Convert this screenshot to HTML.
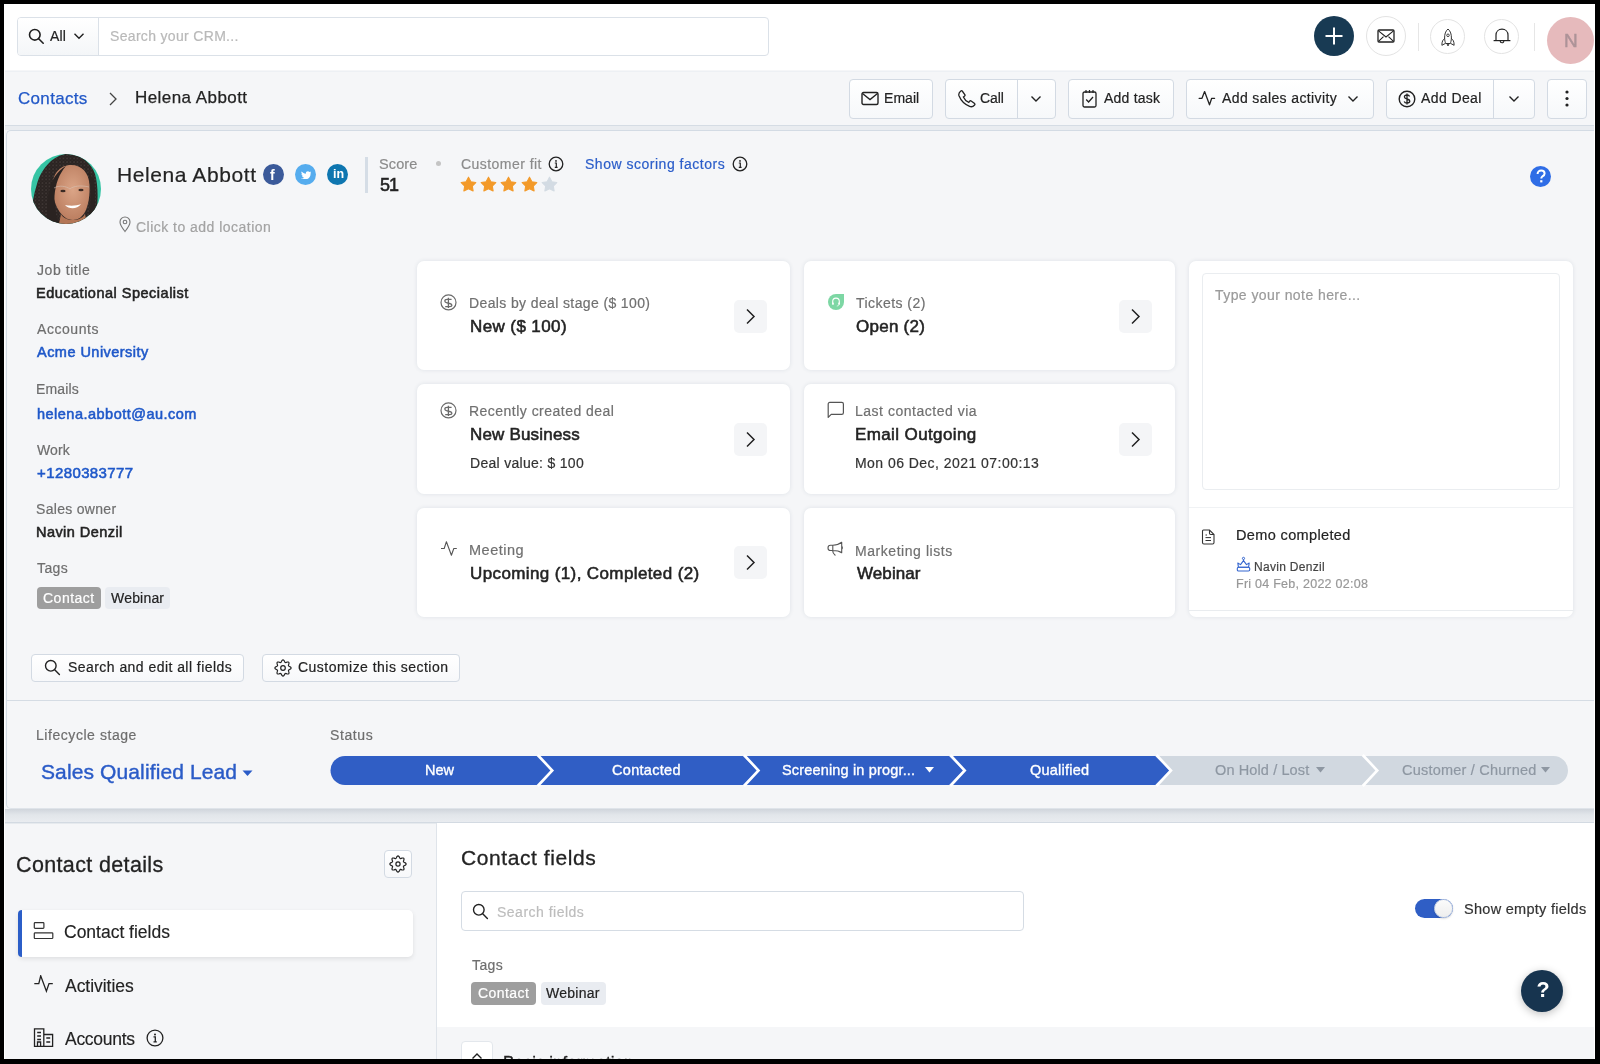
<!DOCTYPE html><html><head><meta charset="utf-8"><style>
html,body{margin:0;padding:0;}
body{width:1600px;height:1064px;position:relative;overflow:hidden;background:#f5f6f8;font-family:"Liberation Sans", sans-serif;}
.a{position:absolute;box-sizing:border-box;}
.t{position:absolute;white-space:nowrap;line-height:1;will-change:transform;}
</style></head><body>
<div class="a" style="left:0px;top:0px;width:1600px;height:70px;background:#fff;"></div>
<div class="a" style="left:0px;top:71px;width:1600px;height:1px;background:#edf0f4;"></div>
<div class="a" style="left:17px;top:17px;width:752px;height:39px;background:#fff;border:1px solid #dbe1e8;border-radius:4px;"></div>
<div class="a" style="left:18px;top:18px;width:80px;height:37px;background:linear-gradient(#ffffff,#f4f6f8);border-radius:3px 0 0 3px;"></div>
<div class="a" style="left:98px;top:18px;width:1px;height:37px;background:#dbe1e8;"></div>
<svg class="a" style="left:28px;top:28px;" width="17" height="17" viewBox="0 0 17 17" fill="none"><circle cx="6.8" cy="6.8" r="5.3" stroke="#1f1f1f" stroke-width="1.6"/><path d="M10.7 10.7 L15.2 15.2" stroke="#1f1f1f" stroke-width="1.6" stroke-linecap="round"/></svg>
<div class="t" style="left:49.80px;top:29.15px;font-size:14px;letter-spacing:0.100px;color:#232323;-webkit-text-stroke:0.2px #232323;">All</div>
<svg class="a" style="left:73px;top:32px;" width="12" height="8" viewBox="0 0 12 8" fill="none"><path d="M1.5 1.8 L6 6.2 L10.5 1.8" stroke="#1f1f1f" stroke-width="1.4" fill="none"/></svg>
<div class="t" style="left:110.00px;top:29.15px;font-size:14px;letter-spacing:0.324px;color:#b9b9b9;-webkit-text-stroke:0.2px #b9b9b9;">Search your CRM...</div>
<div class="a" style="left:1314px;top:16px;width:40px;height:40px;background:#183a53;border-radius:50%;"></div>
<svg class="a" style="left:1324px;top:26px;" width="20" height="20" viewBox="0 0 20 20" fill="none"><path d="M10 1.5 V18.5 M1.5 10 H18.5" stroke="#fff" stroke-width="2"/></svg>
<div class="a" style="left:1366px;top:16px;width:40px;height:40px;background:#fff;border:1px solid #e3e3e3;border-radius:50%;"></div>
<svg class="a" style="left:1377px;top:29px;" width="18" height="14" viewBox="0 0 18 14" fill="none"><rect x="1" y="1" width="16" height="12" rx="1" stroke="#222" stroke-width="1.3"/><path d="M1.5 1.8 L9 8 L16.5 1.8 M1.5 12.4 L6.5 7.6 M16.5 12.4 L11.5 7.6" stroke="#222" stroke-width="1.1"/></svg>
<div class="a" style="left:1418px;top:23px;width:1px;height:28px;background:#e6e6e6;"></div>
<div class="a" style="left:1430px;top:19px;width:35px;height:35px;background:#fff;border:1px solid #e3e3e3;border-radius:50%;"></div>
<svg class="a" style="left:1439px;top:28px;" width="18" height="18" viewBox="0 0 18 18" fill="none"><path d="M9 1 C6.5 3 5.5 6.5 5.6 10 C5.7 12.5 6.2 14.5 6.8 15.5 H11.2 C11.8 14.5 12.3 12.5 12.4 10 C12.5 6.5 11.5 3 9 1 Z" stroke="#333" stroke-width="1"/><circle cx="9" cy="7.3" r="1.3" stroke="#333" stroke-width="0.9"/><path d="M5.8 10.5 C4 11.5 2.8 13.5 2.9 17.3 L6.6 15.3 M12.2 10.5 C14 11.5 15.2 13.5 15.1 17.3 L11.4 15.3 M8.2 15.5 L8.5 17.5 H9.5 L9.8 15.5" stroke="#333" stroke-width="1"/></svg>
<div class="a" style="left:1484px;top:19px;width:35px;height:35px;background:#fff;border:1px solid #e3e3e3;border-radius:50%;"></div>
<svg class="a" style="left:1492px;top:28px;" width="20" height="18" viewBox="0 0 20 18" fill="none"><path d="M4 12.6 V7 C4 3.6 6.6 1.2 10 1.2 C13.4 1.2 16 3.6 16 7 V12.6" stroke="#222" stroke-width="1.2"/><path d="M1.6 12.6 H18.4" stroke="#222" stroke-width="1.2"/><path d="M8.2 13 A1.8 1.8 0 0 0 11.8 13" stroke="#222" stroke-width="1.1"/></svg>
<div class="a" style="left:1534px;top:23px;width:1px;height:28px;background:#e6e6e6;"></div>
<div class="a" style="left:1546.5px;top:16.5px;width:47px;height:47px;background:#e6babc;border-radius:50%;"></div>
<div class="t" style="left:1563.80px;top:30.61px;font-size:19px;letter-spacing:-1.000px;color:#ad9398;-webkit-text-stroke:0.5px #ad9398;">N</div>
<div class="t" style="left:18.00px;top:90.31px;font-size:17px;letter-spacing:0.314px;color:#2258c7;-webkit-text-stroke:0.25px #2258c7;">Contacts</div>
<svg class="a" style="left:108px;top:91px;" width="10" height="16" viewBox="0 0 10 16" fill="none"><path d="M2 2 L8 8 L2 14" stroke="#444" stroke-width="1.3" fill="none"/></svg>
<div class="t" style="left:135.25px;top:88.81px;font-size:17px;letter-spacing:0.438px;color:#232323;-webkit-text-stroke:0.25px #232323;">Helena Abbott</div>
<div class="a" style="left:849px;top:79px;width:84px;height:40px;background:linear-gradient(#ffffff,#f6f8fa);border:1px solid #d3dae3;border-radius:4px;"></div>
<svg class="a" style="left:861px;top:91px;" width="18" height="15" viewBox="0 0 18 15" fill="none"><rect x="1" y="1.5" width="16" height="12" rx="1.5" stroke="#222" stroke-width="1.4"/><path d="M1.5 2.5 L9 8.5 L16.5 2.5" stroke="#222" stroke-width="1.4"/></svg>
<div class="t" style="left:883.80px;top:91.05px;font-size:14px;letter-spacing:0.050px;color:#232323;-webkit-text-stroke:0.2px #232323;">Email</div>
<div class="a" style="left:945px;top:79px;width:111px;height:40px;background:linear-gradient(#ffffff,#f6f8fa);border:1px solid #d3dae3;border-radius:4px;"></div>
<div class="a" style="left:1017px;top:80px;width:1px;height:38px;background:#d3dae3;"></div>
<svg class="a" style="left:957px;top:89px;" width="19" height="19" viewBox="0 0 19 19" fill="none"><path d="M5.2 2 L7.8 5.6 C8.2 6.2 8 6.9 7.4 7.3 L6.4 8 C7.4 10.4 9.4 12.4 11.8 13.4 L12.5 12.4 C12.9 11.8 13.6 11.6 14.2 12 L17.6 14.6 C18 15 18 15.6 17.6 16 C16.2 17.6 14.6 18.2 12.6 17.4 C7.6 15.4 4 11.8 2 6.8 C1.4 5 2 3.4 3.8 2 C4.2 1.6 4.8 1.6 5.2 2 Z" stroke="#222" stroke-width="1.3" fill="none"/></svg>
<div class="t" style="left:980.00px;top:91.05px;font-size:14px;letter-spacing:-0.067px;color:#232323;-webkit-text-stroke:0.2px #232323;">Call</div>
<svg class="a" style="left:1030px;top:94.5px;" width="12" height="8" viewBox="0 0 12 8" fill="none"><path d="M1.5 1.5 L6 6 L10.5 1.5" stroke="#222" stroke-width="1.4" fill="none"/></svg>
<div class="a" style="left:1068px;top:79px;width:106px;height:40px;background:linear-gradient(#ffffff,#f6f8fa);border:1px solid #d3dae3;border-radius:4px;"></div>
<svg class="a" style="left:1082px;top:89px;" width="15" height="19" viewBox="0 0 15 19" fill="none"><rect x="1" y="3" width="13" height="15" rx="1.5" stroke="#222" stroke-width="1.3"/><path d="M4 1 V4 M7.5 1 V4 M11 1 V4" stroke="#222" stroke-width="1.2"/><path d="M4.2 10.5 L6.6 13 L11 8" stroke="#222" stroke-width="1.3" fill="none"/></svg>
<div class="t" style="left:1104.40px;top:91.05px;font-size:14px;letter-spacing:0.229px;color:#232323;-webkit-text-stroke:0.2px #232323;">Add task</div>
<div class="a" style="left:1186px;top:79px;width:188px;height:40px;background:linear-gradient(#ffffff,#f6f8fa);border:1px solid #d3dae3;border-radius:4px;"></div>
<svg class="a" style="left:1198px;top:90px;" width="18" height="17" viewBox="0 0 18 17" fill="none"><path d="M1.1 8.3 H4 L6.6 1.6 L11.5 14.8 L13.7 8.3 H16.6" stroke="#222" stroke-width="1.3" fill="none" stroke-linejoin="round" stroke-linecap="round"/></svg>
<div class="t" style="left:1222.40px;top:91.05px;font-size:14px;letter-spacing:0.388px;color:#232323;-webkit-text-stroke:0.2px #232323;">Add sales activity</div>
<svg class="a" style="left:1347px;top:95px;" width="12" height="8" viewBox="0 0 12 8" fill="none"><path d="M1.5 1.5 L6 6 L10.5 1.5" stroke="#222" stroke-width="1.4" fill="none"/></svg>
<div class="a" style="left:1386px;top:79px;width:149px;height:40px;background:linear-gradient(#ffffff,#f6f8fa);border:1px solid #d3dae3;border-radius:4px;"></div>
<div class="a" style="left:1493px;top:80px;width:1px;height:38px;background:#d3dae3;"></div>
<svg class="a" style="left:1398px;top:90px;" width="18" height="18" viewBox="0 0 18 18" fill="none"><circle cx="9" cy="9" r="7.8" stroke="#222" stroke-width="1.4"/><path d="M11.6 6.4 C11.2 5.4 10.2 5 9 5 C7.4 5 6.4 5.8 6.4 7 C6.4 9.6 11.8 8.4 11.8 11 C11.8 12.2 10.6 13 9 13 C7.6 13 6.6 12.4 6.2 11.4 M9 3.4 V14.6" stroke="#222" stroke-width="1.3" fill="none"/></svg>
<div class="t" style="left:1421.00px;top:91.05px;font-size:14px;letter-spacing:0.400px;color:#232323;-webkit-text-stroke:0.2px #232323;">Add Deal</div>
<svg class="a" style="left:1508px;top:95px;" width="12" height="8" viewBox="0 0 12 8" fill="none"><path d="M1.5 1.5 L6 6 L10.5 1.5" stroke="#222" stroke-width="1.4" fill="none"/></svg>
<div class="a" style="left:1547px;top:79px;width:40px;height:40px;background:linear-gradient(#ffffff,#f6f8fa);border:1px solid #d3dae3;border-radius:4px;"></div>
<svg class="a" style="left:1564px;top:89px;" width="6" height="19" viewBox="0 0 6 19" fill="none"><circle cx="3" cy="3" r="1.6" fill="#222"/><circle cx="3" cy="9.5" r="1.6" fill="#222"/><circle cx="3" cy="16" r="1.6" fill="#222"/></svg>
<div class="a" style="left:0px;top:125px;width:1600px;height:1px;background:#d5dce4;"></div>
<div class="a" style="left:0px;top:126px;width:1600px;height:4px;background:#e9ecf0;"></div>
<div class="a" style="left:6px;top:130px;width:1610px;height:679px;background:#f5f6f8;border:1px solid #d3dbe4;border-right:none;border-bottom-color:#dfe4ea;border-radius:5px 0 0 5px;"></div>
<svg class="a" style="left:31px;top:154px;" width="70" height="70" viewBox="0 0 70 70" fill="none"><defs><clipPath id="av"><circle cx="35" cy="35" r="35"/></clipPath>
<radialGradient id="sk" cx="0.55" cy="0.45" r="0.6"><stop offset="0" stop-color="#dba587"/><stop offset="1" stop-color="#b97b5d"/></radialGradient>
<pattern id="curl" width="3.5" height="3.5" patternUnits="userSpaceOnUse"><circle cx="1" cy="1" r="0.7" fill="#6b605c" opacity="0.55"/><circle cx="2.7" cy="2.6" r="0.5" fill="#5a504c" opacity="0.5"/></pattern></defs>
<g clip-path="url(#av)">
<rect width="70" height="70" fill="#36c4a4"/>
<path d="M1 70 C0 56 2 42 6 30 C10 16 20 3 34 0 C48 -1 60 8 64 20 C67 30 67 44 66 54 C64 62 60 68 58 70 Z" fill="#2a2321"/>
<path d="M1 70 C0 56 2 42 6 30 C10 16 20 3 34 0 C48 -1 60 8 64 20 C67 30 67 44 66 54 C64 62 60 68 58 70 Z" fill="url(#curl)"/>
<path d="M40 11 C51 11 58 19 58.5 31 C59 41 57.5 51 54 58 C51 63 47 66 42 66 C36 66 31 62 27.5 56 C24 50 21.5 42 21.5 32 C21.5 20 29 11 40 11 Z" fill="url(#sk)"/>
<path d="M30 60 C34 68 50 68 54 60 L56 70 H28 Z" fill="#b47656"/>
<path d="M17 70 C15 60 16 46 18.5 36 C20.5 26 26 17 35 12 C28 20 24.5 30 23.5 42 C23 52 25 62 28 70 Z" fill="#2a2321"/>
<path d="M56.5 17 C60 25 60.5 38 59.5 52 C59 60 57 66 55 70 H62 C64 58 65 40 63 26 Z" fill="#2a2321"/>
<ellipse cx="32" cy="37" rx="2.6" ry="1.3" fill="#3a2a24"/>
<ellipse cx="50" cy="36" rx="2.6" ry="1.3" fill="#3a2a24"/>
<path d="M23 34 C28 31 35 32 39 35 C42 32 50 31 58 33" stroke="#d8c4b8" stroke-width="0.8" fill="none" opacity="0.7"/>
<path d="M34 51 C38 55.5 46 55.5 50 50 C46 52 38 52 34 51 Z" fill="#fff"/>
</g></svg>
<div class="t" style="left:117.10px;top:164.42px;font-size:21px;letter-spacing:0.592px;color:#232323;-webkit-text-stroke:0.2px #232323;">Helena Abbott</div>
<div class="a" style="left:263px;top:164px;width:21px;height:21px;background:#3b5a9a;border-radius:50%;"></div>
<div class="t " style="left:270.3px;top:167.85px;font-size:14px;color:#fff;font-weight:700;">f</div>
<div class="a" style="left:295px;top:164px;width:21px;height:21px;background:#55acee;border-radius:50%;"></div>
<svg class="a" style="left:300.8px;top:170.6px;" width="10.4" height="8.8" viewBox="0 0 13 11" fill="none"><path d="M12.5 1.6 C12 1.8 11.6 2 11 2 C11.6 1.6 12 1.1 12.2 0.5 C11.7 0.8 11.1 1 10.5 1.1 C9.5 0 7.8 0 6.8 1 C6.2 1.6 6 2.5 6.2 3.3 C4 3.2 2 2.1 0.8 0.6 C0.1 1.8 0.5 3.3 1.6 4.1 C1.2 4.1 0.8 4 0.5 3.8 C0.5 5.1 1.4 6.2 2.6 6.4 C2.2 6.5 1.8 6.5 1.4 6.5 C1.8 7.6 2.8 8.3 3.9 8.3 C2.8 9.2 1.4 9.6 0 9.5 C5.5 12.8 12.5 9.4 12 2.8 C12.4 2.5 12.8 2.1 12.5 1.6 Z" fill="#fff"/></svg>
<div class="a" style="left:327px;top:164px;width:21px;height:21px;background:#0e76b0;border-radius:50%;"></div>
<div class="t " style="left:332.5px;top:168.42px;font-size:12.5px;color:#fff;font-weight:700;">in</div>
<div class="a" style="left:365px;top:157px;width:3px;height:36px;background:#d5dde6;"></div>
<div class="t" style="left:378.50px;top:156.52px;font-size:14.5px;letter-spacing:0.125px;color:#8b8b8b;-webkit-text-stroke:0.2px #8b8b8b;">Score</div>
<div class="a" style="left:436px;top:161px;width:5px;height:5px;background:#c4c4c4;border-radius:50%;"></div>
<div class="t" style="left:380.00px;top:176.06px;font-size:18px;letter-spacing:-1.000px;color:#232323;-webkit-text-stroke:0.55px #232323;">51</div>
<div class="t" style="left:460.80px;top:156.95px;font-size:14px;letter-spacing:0.455px;color:#8b8b8b;-webkit-text-stroke:0.2px #8b8b8b;">Customer fit</div>
<svg class="a" style="left:548px;top:156px;" width="16" height="16" viewBox="0 0 16 16" fill="none"><circle cx="8" cy="8" r="6.8" stroke="#222" stroke-width="1.3"/><circle cx="8" cy="4.9" r="0.9" fill="#222"/><path d="M6.8 7 H8.3 V11.3 M6.8 11.3 H9.6" stroke="#222" stroke-width="1.2"/></svg>
<svg class="a" style="left:459.5px;top:176px;" width="17" height="16" viewBox="0 0 17 16" fill="none"><path d="M8.5 1.2 L10.9 5.7 L15.8 6.5 L12.3 10 L13.1 14.9 L8.5 12.7 L3.9 14.9 L4.7 10 L1.2 6.5 L6.1 5.7 Z" fill="#f39a2a" stroke="#f39a2a" stroke-width="1.1" stroke-linejoin="round"/></svg>
<svg class="a" style="left:480px;top:176px;" width="17" height="16" viewBox="0 0 17 16" fill="none"><path d="M8.5 1.2 L10.9 5.7 L15.8 6.5 L12.3 10 L13.1 14.9 L8.5 12.7 L3.9 14.9 L4.7 10 L1.2 6.5 L6.1 5.7 Z" fill="#f39a2a" stroke="#f39a2a" stroke-width="1.1" stroke-linejoin="round"/></svg>
<svg class="a" style="left:500px;top:176px;" width="17" height="16" viewBox="0 0 17 16" fill="none"><path d="M8.5 1.2 L10.9 5.7 L15.8 6.5 L12.3 10 L13.1 14.9 L8.5 12.7 L3.9 14.9 L4.7 10 L1.2 6.5 L6.1 5.7 Z" fill="#f39a2a" stroke="#f39a2a" stroke-width="1.1" stroke-linejoin="round"/></svg>
<svg class="a" style="left:520.5px;top:176px;" width="17" height="16" viewBox="0 0 17 16" fill="none"><path d="M8.5 1.2 L10.9 5.7 L15.8 6.5 L12.3 10 L13.1 14.9 L8.5 12.7 L3.9 14.9 L4.7 10 L1.2 6.5 L6.1 5.7 Z" fill="#f39a2a" stroke="#f39a2a" stroke-width="1.1" stroke-linejoin="round"/></svg>
<svg class="a" style="left:541px;top:176px;" width="17" height="16" viewBox="0 0 17 16" fill="none"><path d="M8.5 1.2 L10.9 5.7 L15.8 6.5 L12.3 10 L13.1 14.9 L8.5 12.7 L3.9 14.9 L4.7 10 L1.2 6.5 L6.1 5.7 Z" fill="#d3dbe3" stroke="#d3dbe3" stroke-width="1.1" stroke-linejoin="round"/></svg>
<div class="t" style="left:585.30px;top:157.15px;font-size:14px;letter-spacing:0.511px;color:#2b5dc9;-webkit-text-stroke:0.2px #2b5dc9;">Show scoring factors</div>
<svg class="a" style="left:732px;top:156px;" width="16" height="16" viewBox="0 0 16 16" fill="none"><circle cx="8" cy="8" r="6.8" stroke="#222" stroke-width="1.3"/><circle cx="8" cy="4.9" r="0.9" fill="#222"/><path d="M6.8 7 H8.3 V11.3 M6.8 11.3 H9.6" stroke="#222" stroke-width="1.2"/></svg>
<svg class="a" style="left:118px;top:216px;" width="14" height="17" viewBox="0 0 14 17" fill="none"><path d="M7 15.5 C3.6 11.2 2 8.4 2 6 C2 3.2 4.2 1 7 1 C9.8 1 12 3.2 12 6 C12 8.4 10.4 11.2 7 15.5 Z" stroke="#777" stroke-width="1.1"/><circle cx="7" cy="6" r="1.8" stroke="#777" stroke-width="1.1"/></svg>
<div class="t" style="left:136.00px;top:219.65px;font-size:14px;letter-spacing:0.475px;color:#a3a3a3;-webkit-text-stroke:0.2px #a3a3a3;">Click to add location</div>
<div class="a" style="left:1530px;top:166px;width:21px;height:21px;background:#2f6de6;border-radius:50%;"></div>
<svg class="a" style="left:1535px;top:169px;" width="12" height="15" viewBox="0 0 12 15" fill="none"><path d="M2.6 5 C2.6 2.8 4.2 1.4 6.2 1.4 C8.2 1.4 9.6 2.7 9.6 4.4 C9.6 6.1 8.4 6.8 7.3 7.5 C6.6 8 6.3 8.5 6.3 9.6" stroke="#fff" stroke-width="2" fill="none"/><rect x="5.2" y="11.2" width="2.2" height="2.2" fill="#fff"/></svg>
<div class="t" style="left:37.30px;top:262.95px;font-size:14px;letter-spacing:0.562px;color:#6e6e6e;-webkit-text-stroke:0.2px #6e6e6e;">Job title</div>
<div class="t" style="left:36.30px;top:286.22px;font-size:14.5px;letter-spacing:0.500px;color:#232323;-webkit-text-stroke:0.55px #232323;">Educational Specialist</div>
<div class="t" style="left:37.25px;top:321.95px;font-size:14px;letter-spacing:0.550px;color:#6e6e6e;-webkit-text-stroke:0.2px #6e6e6e;">Accounts</div>
<div class="t" style="left:37.00px;top:344.62px;font-size:14.5px;letter-spacing:0.464px;color:#1f58c9;-webkit-text-stroke:0.55px #1f58c9;">Acme University</div>
<div class="t" style="left:36.00px;top:381.95px;font-size:14px;letter-spacing:0.150px;color:#6e6e6e;-webkit-text-stroke:0.2px #6e6e6e;">Emails</div>
<div class="t" style="left:37.00px;top:407.12px;font-size:14.5px;letter-spacing:0.489px;color:#1f58c9;-webkit-text-stroke:0.55px #1f58c9;">helena.abbott@au.com</div>
<div class="t" style="left:37.00px;top:442.55px;font-size:14px;letter-spacing:0.083px;color:#6e6e6e;-webkit-text-stroke:0.2px #6e6e6e;">Work</div>
<div class="t" style="left:37.00px;top:465.30px;font-size:15.0px;letter-spacing:0.400px;color:#1f58c9;-webkit-text-stroke:0.55px #1f58c9;">+1280383777</div>
<div class="t" style="left:36.00px;top:501.95px;font-size:14px;letter-spacing:0.300px;color:#6e6e6e;-webkit-text-stroke:0.2px #6e6e6e;">Sales owner</div>
<div class="t" style="left:36.00px;top:524.62px;font-size:14.5px;letter-spacing:0.445px;color:#232323;-webkit-text-stroke:0.55px #232323;">Navin Denzil</div>
<div class="t" style="left:37.00px;top:561.15px;font-size:14px;letter-spacing:0.417px;color:#6e6e6e;-webkit-text-stroke:0.2px #6e6e6e;">Tags</div>
<div class="a" style="left:37px;top:587px;width:64px;height:22px;background:#9e9e9e;border-radius:4px;"></div>
<div class="t" style="left:42.75px;top:590.95px;font-size:14px;letter-spacing:0.500px;color:#fff;-webkit-text-stroke:0.2px #fff;">Contact</div>
<div class="a" style="left:105px;top:587px;width:65px;height:22px;background:#e9ecf1;border-radius:4px;"></div>
<div class="t" style="left:111.25px;top:590.95px;font-size:14px;letter-spacing:0.192px;color:#232323;-webkit-text-stroke:0.2px #232323;">Webinar</div>
<div class="a" style="left:417px;top:261px;width:373px;height:109px;background:#fff;border-radius:7px;box-shadow:0 0 4px rgba(40,60,90,0.11);"></div>
<svg class="a" style="left:440.0px;top:293.5px;" width="17" height="17" viewBox="0 0 17 17" fill="none"><circle cx="8.5" cy="8.4" r="7.5" stroke="#6a6a6a" stroke-width="1.2"/><path d="M11.6 5.3 H7.2 C5.7 5.3 4.8 6.1 4.8 7.1 C4.8 8.1 5.6 8.6 7 8.9 L9.8 9.5 C11.1 9.8 11.9 10.4 11.9 11.3 C11.9 12.2 11 12.6 9.8 12.6 H5.2 M8.4 3.7 V13.9" stroke="#6a6a6a" stroke-width="1.3" fill="none"/></svg>
<div class="t" style="left:469.20px;top:296.35px;font-size:14px;letter-spacing:0.377px;color:#707070;-webkit-text-stroke:0.2px #707070;">Deals by deal stage ($ 100)</div>
<div class="t" style="left:470.00px;top:318.21px;font-size:17.0px;letter-spacing:0.400px;color:#232323;-webkit-text-stroke:0.55px #232323;">New ($ 100)</div>
<div class="a" style="left:734px;top:300px;width:33px;height:33px;background:#f4f5f7;border-radius:5px;"></div>
<svg class="a" style="left:745px;top:308px;" width="12" height="17" viewBox="0 0 12 17" fill="none"><path d="M2 1.5 L9 8.5 L2 15.5" stroke="#222" stroke-width="1.5" fill="none"/></svg>
<div class="a" style="left:804px;top:261px;width:371px;height:109px;background:#fff;border-radius:7px;box-shadow:0 0 4px rgba(40,60,90,0.11);"></div>
<svg class="a" style="left:827.5px;top:294px;" width="16" height="16" viewBox="0 0 16 16" fill="none"><path d="M8 0 H16 V8 A8 8 0 0 1 8 16 A8 8 0 0 1 0 8 A8 8 0 0 1 8 0 Z" fill="#7dd7a4"/><path d="M4.7 9.6 V7.4 A3.3 3.3 0 0 1 11.3 7.4 V9.6" stroke="#fff" stroke-width="1.1"/><rect x="4.1" y="8.4" width="1.7" height="2.4" rx="0.6" fill="#fff"/><rect x="10.2" y="8.4" width="1.7" height="2.4" rx="0.6" fill="#fff"/><path d="M11 10.6 Q10.6 12 8.8 12.1" stroke="#fff" stroke-width="0.8" opacity="0.8"/></svg>
<div class="t" style="left:855.50px;top:296.35px;font-size:14px;letter-spacing:0.450px;color:#707070;-webkit-text-stroke:0.2px #707070;">Tickets (2)</div>
<div class="t" style="left:856.25px;top:318.21px;font-size:17.0px;letter-spacing:0.250px;color:#232323;-webkit-text-stroke:0.55px #232323;">Open (2)</div>
<div class="a" style="left:1119px;top:300px;width:33px;height:33px;background:#f4f5f7;border-radius:5px;"></div>
<svg class="a" style="left:1130px;top:308px;" width="12" height="17" viewBox="0 0 12 17" fill="none"><path d="M2 1.5 L9 8.5 L2 15.5" stroke="#222" stroke-width="1.5" fill="none"/></svg>
<div class="a" style="left:417px;top:384px;width:373px;height:110px;background:#fff;border-radius:7px;box-shadow:0 0 4px rgba(40,60,90,0.11);"></div>
<svg class="a" style="left:440.0px;top:401.5px;" width="17" height="17" viewBox="0 0 17 17" fill="none"><circle cx="8.5" cy="8.4" r="7.5" stroke="#6a6a6a" stroke-width="1.2"/><path d="M11.6 5.3 H7.2 C5.7 5.3 4.8 6.1 4.8 7.1 C4.8 8.1 5.6 8.6 7 8.9 L9.8 9.5 C11.1 9.8 11.9 10.4 11.9 11.3 C11.9 12.2 11 12.6 9.8 12.6 H5.2 M8.4 3.7 V13.9" stroke="#6a6a6a" stroke-width="1.3" fill="none"/></svg>
<div class="t" style="left:468.50px;top:404.15px;font-size:14px;letter-spacing:0.475px;color:#707070;-webkit-text-stroke:0.2px #707070;">Recently created deal</div>
<div class="t" style="left:470.00px;top:426.11px;font-size:17.0px;letter-spacing:0.182px;color:#232323;-webkit-text-stroke:0.55px #232323;">New Business</div>
<div class="t" style="left:470.00px;top:456.15px;font-size:14px;letter-spacing:0.297px;color:#333;-webkit-text-stroke:0.2px #333;">Deal value: $ 100</div>
<div class="a" style="left:734px;top:423px;width:33px;height:33px;background:#f4f5f7;border-radius:5px;"></div>
<svg class="a" style="left:745px;top:431px;" width="12" height="17" viewBox="0 0 12 17" fill="none"><path d="M2 1.5 L9 8.5 L2 15.5" stroke="#222" stroke-width="1.5" fill="none"/></svg>
<div class="a" style="left:804px;top:384px;width:371px;height:110px;background:#fff;border-radius:7px;box-shadow:0 0 4px rgba(40,60,90,0.11);"></div>
<svg class="a" style="left:826px;top:401px;" width="19" height="18" viewBox="0 0 19 18" fill="none"><path d="M2.2 16.4 V3 C2.2 2.1 2.9 1.4 3.8 1.4 H15.8 C16.7 1.4 17.4 2.1 17.4 3 V11.8 C17.4 12.7 16.7 13.4 15.8 13.4 H5.2 Z" stroke="#555" stroke-width="1.2" fill="none" stroke-linejoin="round"/></svg>
<div class="t" style="left:854.50px;top:404.15px;font-size:14px;letter-spacing:0.515px;color:#707070;-webkit-text-stroke:0.2px #707070;">Last contacted via</div>
<div class="t" style="left:855.25px;top:426.11px;font-size:17.0px;letter-spacing:0.385px;color:#232323;-webkit-text-stroke:0.55px #232323;">Email Outgoing</div>
<div class="t" style="left:855.25px;top:456.15px;font-size:14px;letter-spacing:0.458px;color:#333;-webkit-text-stroke:0.2px #333;">Mon 06 Dec, 2021 07:00:13</div>
<div class="a" style="left:1119px;top:423px;width:33px;height:33px;background:#f4f5f7;border-radius:5px;"></div>
<svg class="a" style="left:1130px;top:431px;" width="12" height="17" viewBox="0 0 12 17" fill="none"><path d="M2 1.5 L9 8.5 L2 15.5" stroke="#222" stroke-width="1.5" fill="none"/></svg>
<div class="a" style="left:417px;top:508px;width:373px;height:109px;background:#fff;border-radius:7px;box-shadow:0 0 4px rgba(40,60,90,0.11);"></div>
<svg class="a" style="left:440px;top:540px;" width="18" height="17" viewBox="0 0 18 17" fill="none"><path d="M1 8.5 H4.2 L6.4 1.7 L11.4 15.2 L13.8 8.5 H16.8" stroke="#555" stroke-width="1.1" fill="none" stroke-linejoin="round"/></svg>
<div class="t" style="left:468.50px;top:543.22px;font-size:14.5px;letter-spacing:0.500px;color:#707070;-webkit-text-stroke:0.2px #707070;">Meeting</div>
<div class="t" style="left:470.00px;top:564.91px;font-size:17.0px;letter-spacing:0.385px;color:#232323;-webkit-text-stroke:0.55px #232323;">Upcoming (1), Completed (2)</div>
<div class="a" style="left:734px;top:546px;width:33px;height:33px;background:#f4f5f7;border-radius:5px;"></div>
<svg class="a" style="left:745px;top:554px;" width="12" height="17" viewBox="0 0 12 17" fill="none"><path d="M2 1.5 L9 8.5 L2 15.5" stroke="#222" stroke-width="1.5" fill="none"/></svg>
<div class="a" style="left:804px;top:508px;width:371px;height:109px;background:#fff;border-radius:7px;box-shadow:0 0 4px rgba(40,60,90,0.11);"></div>
<svg class="a" style="left:826px;top:540px;" width="18" height="17" viewBox="0 0 18 17" fill="none"><path d="M6.8 5.2 H4.5 C3 5.2 2 6.3 2 7.9 C2 9.5 3 10.5 4.5 10.5 H6.8 Z M6.8 5.2 C9 5.2 13 4.5 15.7 2.3 V12.8 C13 10.8 9 10.5 6.8 10.5 Z M15.7 6.2 C16.6 6.5 16.6 8.9 15.7 9.2 M6.6 10.5 C6.6 12.5 7.5 14 9.4 15.5" stroke="#555" stroke-width="1.1" fill="none" stroke-linejoin="round"/></svg>
<div class="t" style="left:854.50px;top:543.65px;font-size:14px;letter-spacing:0.554px;color:#707070;-webkit-text-stroke:0.2px #707070;">Marketing lists</div>
<div class="t" style="left:857.00px;top:564.91px;font-size:17.0px;letter-spacing:0.083px;color:#232323;-webkit-text-stroke:0.55px #232323;">Webinar</div>
<div class="a" style="left:1189px;top:261px;width:384px;height:356px;background:#fff;border-radius:7px;box-shadow:0 0 4px rgba(40,60,90,0.11);"></div>
<div class="a" style="left:1202px;top:273px;width:358px;height:217px;background:#fff;border:1px solid #eaedf0;border-radius:4px;"></div>
<div class="t" style="left:1214.60px;top:287.75px;font-size:14px;letter-spacing:0.429px;color:#9a9a9a;-webkit-text-stroke:0.2px #9a9a9a;">Type your note here...</div>
<div class="a" style="left:1189px;top:507px;width:384px;height:1px;background:#f0f2f4;"></div>
<svg class="a" style="left:1201px;top:529px;" width="15" height="16" viewBox="0 0 15 16" fill="none"><path d="M2.5 1 H8.5 L13 5.5 V13.5 C13 14.3 12.4 15 11.6 15 H2.9 C2.1 15 1.5 14.3 1.5 13.5 V2.2 C1.5 1.5 1.9 1 2.5 1 Z M8.5 1 V4.3 C8.5 5 9 5.5 9.7 5.5 H13" stroke="#333" stroke-width="1.1" fill="none"/><path d="M4.5 6 H6 M4.5 8.6 H10 M4.5 11.5 H10" stroke="#333" stroke-width="1"/></svg>
<div class="t" style="left:1235.50px;top:527.92px;font-size:14.5px;letter-spacing:0.362px;color:#232323;-webkit-text-stroke:0.2px #232323;">Demo completed</div>
<svg class="a" style="left:1236px;top:556px;" width="15" height="16" viewBox="0 0 15 16" fill="none"><circle cx="7.5" cy="2.4" r="1.1" stroke="#3566cf" stroke-width="1"/><path d="M7.5 3.5 V4.6 M1.8 7 L4.5 8.6 L7.5 4.6 L10.5 8.6 L13.2 7 L12.6 11.2 H2.4 Z" stroke="#3566cf" stroke-width="1.1" fill="none" stroke-linejoin="round"/><rect x="1.3" y="11.2" width="12.4" height="3.8" rx="1.2" stroke="#3566cf" stroke-width="1.1"/></svg>
<div class="t" style="left:1253.50px;top:560.84px;font-size:12px;letter-spacing:0.291px;color:#444;-webkit-text-stroke:0.2px #444;">Navin Denzil</div>
<div class="t" style="left:1235.50px;top:578.42px;font-size:12.5px;letter-spacing:0.257px;color:#989898;-webkit-text-stroke:0.2px #989898;">Fri 04 Feb, 2022 02:08</div>
<div class="a" style="left:1189px;top:610px;width:384px;height:1px;background:#e9ecef;"></div>
<div class="a" style="left:31px;top:654px;width:213px;height:28px;background:linear-gradient(#ffffff,#f7f8fa);border:1px solid #d3dae3;border-radius:4px;"></div>
<svg class="a" style="left:44px;top:659px;" width="17" height="17" viewBox="0 0 17 17" fill="none"><circle cx="6.8" cy="6.8" r="5.3" stroke="#222" stroke-width="1.4"/><path d="M10.7 10.7 L15.4 15.4" stroke="#222" stroke-width="1.4" stroke-linecap="round"/></svg>
<div class="t" style="left:67.60px;top:660.45px;font-size:14px;letter-spacing:0.448px;color:#232323;-webkit-text-stroke:0.2px #232323;">Search and edit all fields</div>
<div class="a" style="left:262px;top:654px;width:198px;height:28px;background:linear-gradient(#ffffff,#f7f8fa);border:1px solid #d3dae3;border-radius:4px;"></div>
<svg class="a" style="left:273.7px;top:658.5px;" width="18" height="18" viewBox="0 0 18 18" fill="none"><path d="M9.00 0.90 L9.52 1.06 L9.99 1.51 L10.37 2.13 L10.67 2.77 L10.94 3.27 L11.26 3.55 L11.67 3.58 L12.22 3.41 L12.89 3.18 L13.60 3.01 L14.24 3.02 L14.73 3.27 L14.98 3.76 L14.99 4.40 L14.82 5.11 L14.59 5.78 L14.42 6.33 L14.45 6.74 L14.73 7.06 L15.23 7.33 L15.87 7.63 L16.49 8.01 L16.94 8.48 L17.10 9.00 L16.94 9.52 L16.49 9.99 L15.87 10.37 L15.23 10.67 L14.73 10.94 L14.45 11.26 L14.42 11.67 L14.59 12.22 L14.82 12.89 L14.99 13.60 L14.98 14.24 L14.73 14.73 L14.24 14.98 L13.60 14.99 L12.89 14.82 L12.22 14.59 L11.67 14.42 L11.26 14.45 L10.94 14.73 L10.67 15.23 L10.37 15.87 L9.99 16.49 L9.52 16.94 L9.00 17.10 L8.48 16.94 L8.01 16.49 L7.63 15.87 L7.33 15.23 L7.06 14.73 L6.74 14.45 L6.33 14.42 L5.78 14.59 L5.11 14.82 L4.40 14.99 L3.76 14.98 L3.27 14.73 L3.02 14.24 L3.01 13.60 L3.18 12.89 L3.41 12.23 L3.58 11.67 L3.55 11.26 L3.27 10.94 L2.77 10.67 L2.13 10.37 L1.51 9.99 L1.06 9.52 L0.90 9.00 L1.06 8.48 L1.51 8.01 L2.13 7.63 L2.77 7.33 L3.27 7.06 L3.55 6.74 L3.58 6.33 L3.41 5.77 L3.18 5.11 L3.01 4.40 L3.02 3.76 L3.27 3.27 L3.76 3.02 L4.40 3.01 L5.11 3.18 L5.77 3.41 L6.33 3.58 L6.74 3.55 L7.06 3.27 L7.33 2.77 L7.63 2.13 L8.01 1.51 L8.48 1.06 L9.00 0.90Z" stroke="#222" stroke-width="1.15" fill="none" stroke-linejoin="round"/><circle cx="9" cy="9" r="2.3" stroke="#222" stroke-width="1.2"/></svg>
<div class="t" style="left:297.80px;top:660.45px;font-size:14px;letter-spacing:0.471px;color:#232323;-webkit-text-stroke:0.2px #232323;">Customize this section</div>
<div class="a" style="left:7px;top:700px;width:1600px;height:1px;background:#d5dce4;"></div>
<div class="t" style="left:36.00px;top:727.65px;font-size:14px;letter-spacing:0.554px;color:#6e6e6e;-webkit-text-stroke:0.2px #6e6e6e;">Lifecycle stage</div>
<div class="t" style="left:41.00px;top:761.02px;font-size:21px;letter-spacing:0.118px;color:#2a5bc7;-webkit-text-stroke:0.4px #2a5bc7;">Sales Qualified Lead</div>
<svg class="a" style="left:242px;top:770px;" width="11" height="7" viewBox="0 0 11 7" fill="none"><path d="M0.5 0.5 H10.5 L5.5 6 Z" fill="#2a5bc7"/></svg>
<div class="t" style="left:329.50px;top:727.65px;font-size:14px;letter-spacing:0.600px;color:#6e6e6e;-webkit-text-stroke:0.2px #6e6e6e;">Status</div>
<svg class="a" style="left:0;top:0" width="1600" height="1064"><path d="M345.0 756 H536.75 L551.25 770.5 L536.75 785 H345.0 A14.5 14.5 0 0 1 345.0 756Z" fill="#305ec5"/><path d="M536.75 756 H743.0 L757.5 770.5 L743.0 785 H536.75 L551.25 770.5 Z" fill="#305ec5"/><path d="M743.0 756 H949.25 L963.75 770.5 L949.25 785 H743.0 L757.5 770.5 Z" fill="#305ec5"/><path d="M949.25 756 H1155.5 L1170.0 770.5 L1155.5 785 H949.25 L963.75 770.5 Z" fill="#305ec5"/><path d="M1155.5 756 H1361.75 L1376.25 770.5 L1361.75 785 H1155.5 L1170.0 770.5 Z" fill="#d1d8e0"/><path d="M1361.75 756 H1553.5 A14.5 14.5 0 0 1 1553.5 785 H1361.75 L1376.25 770.5 Z" fill="#d1d8e0"/><path d="M537.75 755 L552.25 770.5 L537.75 786" stroke="#fff" stroke-width="2.6" fill="none"/><path d="M744.0 755 L758.5 770.5 L744.0 786" stroke="#fff" stroke-width="2.6" fill="none"/><path d="M950.25 755 L964.75 770.5 L950.25 786" stroke="#fff" stroke-width="2.6" fill="none"/><path d="M1156.5 755 L1171.0 770.5 L1156.5 786" stroke="#fff" stroke-width="2.6" fill="none"/><path d="M1362.75 755 L1377.25 770.5 L1362.75 786" stroke="#fff" stroke-width="2.6" fill="none"/></svg>
<div class="t" style="left:425.25px;top:763.42px;font-size:14.5px;letter-spacing:-0.075px;color:#fff;-webkit-text-stroke:0.35px #fff;">New</div>
<div class="t" style="left:612.40px;top:763.42px;font-size:14.5px;letter-spacing:0.300px;color:#fff;-webkit-text-stroke:0.35px #fff;">Contacted</div>
<div class="t" style="left:781.50px;top:762.92px;font-size:14.5px;letter-spacing:0.165px;color:#fff;-webkit-text-stroke:0.35px #fff;">Screening in progr...</div>
<svg class="a" style="left:925px;top:767px;" width="10" height="6" viewBox="0 0 10 6" fill="none"><path d="M0 0 H9 L4.5 5.5 Z" fill="#fff"/></svg>
<div class="t" style="left:1029.75px;top:763.42px;font-size:14.5px;letter-spacing:0.231px;color:#fff;-webkit-text-stroke:0.35px #fff;">Qualified</div>
<div class="t" style="left:1215.30px;top:762.92px;font-size:14.5px;letter-spacing:0.115px;color:#8e97a2;-webkit-text-stroke:0.2px #8e97a2;">On Hold / Lost</div>
<svg class="a" style="left:1316px;top:767px;" width="10" height="6" viewBox="0 0 10 6" fill="none"><path d="M0 0 H9 L4.5 5.5 Z" fill="#8e97a2"/></svg>
<div class="t" style="left:1401.80px;top:762.92px;font-size:14.5px;letter-spacing:0.218px;color:#8e97a2;-webkit-text-stroke:0.2px #8e97a2;">Customer / Churned</div>
<svg class="a" style="left:1541px;top:767px;" width="10" height="6" viewBox="0 0 10 6" fill="none"><path d="M0 0 H9 L4.5 5.5 Z" fill="#8e97a2"/></svg>
<div class="a" style="left:5px;top:809px;width:1600px;height:13px;background:linear-gradient(#d0d5dc,#e2e6ea 45%,#e9ecf0);"></div>
<div class="a" style="left:5px;top:822px;width:1600px;height:1px;background:#d3dae2;"></div>
<div class="a" style="left:5px;top:823px;width:1600px;height:1px;background:#e6eaee;"></div>
<div class="a" style="left:437px;top:823px;width:1157px;height:204px;background:#fff;"></div>
<div class="a" style="left:436px;top:823px;width:1px;height:236px;background:#dfe4ea;"></div>
<div class="t" style="left:15.70px;top:854.80px;font-size:21.5px;letter-spacing:0.357px;color:#232323;-webkit-text-stroke:0.3px #232323;">Contact details</div>
<div class="a" style="left:384px;top:850px;width:28px;height:28px;background:linear-gradient(#ffffff,#f7f8fa);border:1px solid #d3dae3;border-radius:4px;"></div>
<svg class="a" style="left:389px;top:855px;" width="18" height="18" viewBox="0 0 18 18" fill="none"><path d="M9.00 0.90 L9.52 1.06 L9.99 1.51 L10.37 2.13 L10.67 2.77 L10.94 3.27 L11.26 3.55 L11.67 3.58 L12.22 3.41 L12.89 3.18 L13.60 3.01 L14.24 3.02 L14.73 3.27 L14.98 3.76 L14.99 4.40 L14.82 5.11 L14.59 5.78 L14.42 6.33 L14.45 6.74 L14.73 7.06 L15.23 7.33 L15.87 7.63 L16.49 8.01 L16.94 8.48 L17.10 9.00 L16.94 9.52 L16.49 9.99 L15.87 10.37 L15.23 10.67 L14.73 10.94 L14.45 11.26 L14.42 11.67 L14.59 12.22 L14.82 12.89 L14.99 13.60 L14.98 14.24 L14.73 14.73 L14.24 14.98 L13.60 14.99 L12.89 14.82 L12.22 14.59 L11.67 14.42 L11.26 14.45 L10.94 14.73 L10.67 15.23 L10.37 15.87 L9.99 16.49 L9.52 16.94 L9.00 17.10 L8.48 16.94 L8.01 16.49 L7.63 15.87 L7.33 15.23 L7.06 14.73 L6.74 14.45 L6.33 14.42 L5.78 14.59 L5.11 14.82 L4.40 14.99 L3.76 14.98 L3.27 14.73 L3.02 14.24 L3.01 13.60 L3.18 12.89 L3.41 12.23 L3.58 11.67 L3.55 11.26 L3.27 10.94 L2.77 10.67 L2.13 10.37 L1.51 9.99 L1.06 9.52 L0.90 9.00 L1.06 8.48 L1.51 8.01 L2.13 7.63 L2.77 7.33 L3.27 7.06 L3.55 6.74 L3.58 6.33 L3.41 5.77 L3.18 5.11 L3.01 4.40 L3.02 3.76 L3.27 3.27 L3.76 3.02 L4.40 3.01 L5.11 3.18 L5.77 3.41 L6.33 3.58 L6.74 3.55 L7.06 3.27 L7.33 2.77 L7.63 2.13 L8.01 1.51 L8.48 1.06 L9.00 0.90Z" stroke="#222" stroke-width="1.2" fill="none" stroke-linejoin="round"/><circle cx="9" cy="9" r="2.1" stroke="#222" stroke-width="1.2"/></svg>
<div class="a" style="left:18px;top:910px;width:395px;height:47px;background:#fff;border-radius:5px;box-shadow:0 2px 5px rgba(0,0,0,0.09),0 0 2px rgba(0,0,0,0.04);"></div>
<div class="a" style="left:18px;top:910px;width:4px;height:47px;background:#2b5ec8;border-radius:5px 0 0 5px;"></div>
<svg class="a" style="left:33px;top:921px;" width="21" height="19" viewBox="0 0 21 19" fill="none"><rect x="1.3" y="1.6" width="9.6" height="5.7" rx="0.8" stroke="#333" stroke-width="1.2"/><rect x="1.3" y="11.8" width="18.5" height="5.7" rx="0.8" stroke="#333" stroke-width="1.2"/></svg>
<div class="t" style="left:64.10px;top:923.88px;font-size:17.5px;letter-spacing:-0.008px;color:#232323;-webkit-text-stroke:0.15px #232323;">Contact fields</div>
<svg class="a" style="left:33px;top:975px;" width="21" height="18" viewBox="0 0 21 18" fill="none"><path d="M1.3 8.6 H5.8 L7.7 0.8 L13.4 16.2 L16 8.6 H19.8" stroke="#222" stroke-width="1.3" fill="none" stroke-linejoin="miter"/></svg>
<div class="t" style="left:65.00px;top:977.58px;font-size:17.5px;letter-spacing:-0.033px;color:#232323;-webkit-text-stroke:0.15px #232323;">Activities</div>
<svg class="a" style="left:33px;top:1027px;" width="21" height="21" viewBox="0 0 21 21" fill="none"><path d="M1.5 19.3 V1.8 H10.8 V19.3 Z M10.8 7.5 H19.6 V19.3 H10.8 M4.2 5.5 H8 M4.2 9 H8 M4.2 12.5 H8 M13.3 11 H17.2 M13.3 15 H17.2 M4.5 19.3 V15 H7.6 V19.3" stroke="#222" stroke-width="1.3" fill="none"/></svg>
<div class="t" style="left:65.00px;top:1030.78px;font-size:17.5px;letter-spacing:-0.286px;color:#232323;-webkit-text-stroke:0.15px #232323;">Accounts</div>
<svg class="a" style="left:146px;top:1029px;" width="18" height="18" viewBox="0 0 18 18" fill="none"><circle cx="9" cy="9" r="7.9" stroke="#222" stroke-width="1.3"/><circle cx="9" cy="5.4" r="1" fill="#222"/><path d="M7.5 7.8 H9.3 V12.8 M7.5 12.8 H10.8" stroke="#222" stroke-width="1.3"/></svg>
<div class="t" style="left:460.90px;top:846.72px;font-size:21px;letter-spacing:0.577px;color:#232323;-webkit-text-stroke:0.3px #232323;">Contact fields</div>
<div class="a" style="left:461px;top:891px;width:563px;height:40px;background:#fff;border:1px solid #d5dce4;border-radius:4px;"></div>
<svg class="a" style="left:472px;top:903px;" width="17" height="17" viewBox="0 0 17 17" fill="none"><circle cx="6.8" cy="6.8" r="5.3" stroke="#222" stroke-width="1.4"/><path d="M10.7 10.7 L15.4 15.4" stroke="#222" stroke-width="1.4" stroke-linecap="round"/></svg>
<div class="t" style="left:496.80px;top:905.05px;font-size:14px;letter-spacing:0.492px;color:#bdbdbd;-webkit-text-stroke:0.2px #bdbdbd;">Search fields</div>
<div class="t" style="left:472.20px;top:957.85px;font-size:14px;letter-spacing:0.400px;color:#6e6e6e;-webkit-text-stroke:0.2px #6e6e6e;">Tags</div>
<div class="a" style="left:471px;top:982px;width:65px;height:23px;background:#9e9e9e;border-radius:4px;"></div>
<div class="t" style="left:478.00px;top:985.95px;font-size:14px;letter-spacing:0.450px;color:#fff;-webkit-text-stroke:0.2px #fff;">Contact</div>
<div class="a" style="left:541px;top:982px;width:65px;height:23px;background:#e9ecf1;border-radius:4px;"></div>
<div class="t" style="left:546.40px;top:985.95px;font-size:14px;letter-spacing:0.267px;color:#232323;-webkit-text-stroke:0.2px #232323;">Webinar</div>
<div class="a" style="left:1415px;top:899px;width:38px;height:19px;background:#2f5ec5;border-radius:10px;"></div>
<div class="a" style="left:1434px;top:899px;width:19px;height:19px;background:linear-gradient(#fbfbfb,#eeeeee);border:1px solid #c9d4e6;border-radius:50%;box-shadow:0 1px 2px rgba(0,0,0,0.15);"></div>
<div class="t" style="left:1463.80px;top:901.52px;font-size:14.5px;letter-spacing:0.281px;color:#333;-webkit-text-stroke:0.2px #333;">Show empty fields</div>
<div class="a" style="left:1521px;top:970px;width:42px;height:42px;background:#17344f;border-radius:50%;box-shadow:0 2px 8px rgba(0,0,0,0.25);"></div>
<div class="t" style="left:1242.5px;width:600px;text-align:center;top:980.10px;font-size:21.5px;color:#fff;font-weight:700;">?</div>
<div class="a" style="left:437px;top:1027px;width:1157px;height:40px;background:#f5f6f8;"></div>
<div class="a" style="left:461px;top:1041px;width:32px;height:30px;background:#fff;border:1px solid #e3e7ec;border-radius:4px;"></div>
<svg class="a" style="left:471px;top:1052px;" width="12" height="8" viewBox="0 0 12 8" fill="none"><path d="M1.5 6.5 L6 2 L10.5 6.5" stroke="#222" stroke-width="1.4" fill="none"/></svg>
<div class="t" style="left:503.40px;top:1053.61px;font-size:17px;letter-spacing:0.000px;color:#232323;-webkit-text-stroke:0.3px #232323;">Basic information</div>
<div class="a" style="left:4px;top:0px;width:1px;height:1064px;background:#fff;"></div>
<div class="a" style="left:1594px;top:0px;width:1px;height:1064px;background:#fff;"></div>
<div class="a" style="left:0px;top:0px;width:1600px;height:4px;background:#000;"></div>
<div class="a" style="left:0px;top:0px;width:4px;height:1064px;background:#000;"></div>
<div class="a" style="left:1595px;top:0px;width:5px;height:1064px;background:#000;"></div>
<div class="a" style="left:0px;top:1059px;width:1600px;height:5px;background:#000;"></div>
</body></html>
